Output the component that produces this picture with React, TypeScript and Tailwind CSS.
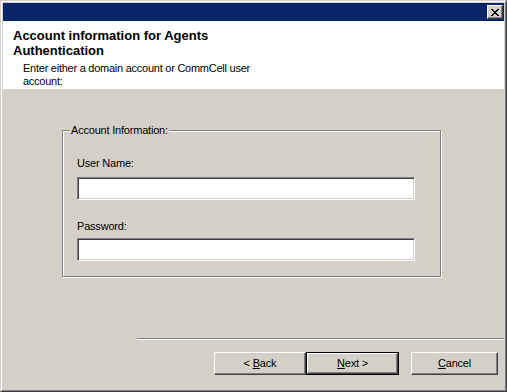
import React from "react"

const font = { fontFamily: '"Liberation Sans", Arial, sans-serif' }

const raised =
  "border border-t-white border-l-white border-r-[#404040] border-b-[#404040] shadow-[inset_-1px_-1px_0_#808080] bg-[#d4d0c8]"

const sunken =
  "border border-t-[#808080] border-l-[#808080] border-r-white border-b-white shadow-[inset_1px_1px_0_#404040,inset_-1px_-1px_0_#d4d0c8] bg-white outline-none"

const App: React.FC = () => {
  return (
    <div style={font} className="w-[507px] h-[392px] bg-[#d4d0c8] text-black">
      <div className="w-full h-full border border-t-[#d4d0c8] border-l-[#d4d0c8] border-r-[#404040] border-b-[#404040]">
        <div className="w-full h-full border border-t-white border-l-white border-r-[#808080] border-b-[#808080] p-[1px] flex flex-col">
          {/* title bar */}
          <div className="h-[18px] bg-[#0a246a] flex justify-end items-start pt-[2px] pr-[1px] shrink-0">
            <div className={`w-[16px] h-[14px] flex items-center justify-center ${raised}`}>
              <svg width="8" height="7" viewBox="0 0 8 7" shapeRendering="crispEdges">
                <path d="M0 0h2v1h-2zM6 0h2v1h-2zM1 1h2v1h-2zM5 1h2v1h-2zM2 2h4v1h-4zM3 3h2v1h-2zM2 4h4v1h-4zM1 5h2v1h-2zM5 5h2v1h-2zM0 6h2v1h-2zM6 6h2v1h-2z" fill="#000" />
              </svg>
            </div>
          </div>

          {/* header */}
          <div className="h-[68px] bg-white pt-[7px] pl-[10px] shrink-0">
            <div className="w-[262px] text-[13px] leading-[15px] font-bold">
              Account information for Agents Authentication
            </div>
            <div className="w-[252px] ml-[10px] mt-[4px] text-[11px] leading-[13px] tracking-[-0.25px]">
              Enter either a domain account or CommCell user account:
            </div>
          </div>

          {/* body */}
          <div className="flex-1 flex flex-col tracking-[-0.2px]">
            <div className="relative ml-[59px] mt-[41px] w-[379px] h-[147px] border border-[#808080] shadow-[1px_1px_0_#fff,inset_1px_1px_0_#fff] pt-[26px] pl-[14px] text-[11px] leading-[13px]">
              <span className="absolute left-[7px] top-[-7px] px-[1px] bg-[#d4d0c8]">Account Information:</span>
              <div>User Name:</div>
              <input className={`mt-[7px] w-[338px] h-[23px] block ${sunken}`} />
              <div className="mt-[20px]">Password:</div>
              <input type="password" className={`mt-[5px] w-[338px] h-[23px] block ${sunken}`} />
            </div>

            <div className="ml-[134px] mt-[61px] h-[2px] border-t border-t-[#808080] border-b border-b-white" />

            <div className="flex justify-end pr-[6px] mt-[12px] text-[11px]">
              <button className={`w-[92px] h-[23px] ${raised}`}>
                &lt; <span className="underline">B</span>ack
              </button>
              <div className="border border-black">
                <button className={`w-[91px] h-[21px] block ${raised}`}>
                  <span className="underline">N</span>ext &gt;
                </button>
              </div>
              <button className={`ml-[12px] w-[87px] h-[23px] ${raised}`}>
                <span className="underline">C</span>ancel
              </button>
            </div>
          </div>
        </div>
      </div>
    </div>
  )
}

export default App
